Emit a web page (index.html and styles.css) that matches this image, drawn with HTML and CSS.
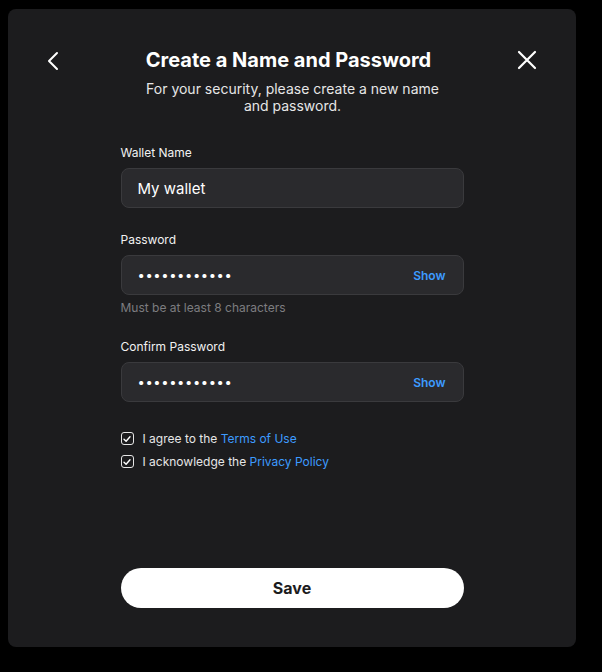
FILE: index.html
```html
<!DOCTYPE html>
<html>
<head>
<meta charset="utf-8">
<link rel="stylesheet" href="styles.css">
</head>
<body>
<div class="card">
  <div class="header">
    <button class="icon-btn back" aria-label="Back">
      <svg width="20" height="20" viewBox="0 0 20 20"><path d="M13 2 L5 10 L13 18" fill="none" stroke="#fff" stroke-width="2" stroke-linecap="round" stroke-linejoin="round"/></svg>
    </button>
    <div class="titles">
      <h1 class="title">Create a Name and Password</h1>
      <p class="subtitle">For your security, please create a new name and password.</p>
    </div>
    <button class="icon-btn close" aria-label="Close">
      <svg width="20" height="20" viewBox="0 0 20 20"><path d="M2 2 L18 18 M18 2 L2 18" fill="none" stroke="#fff" stroke-width="2.2" stroke-linecap="round"/></svg>
    </button>
  </div>
  <div class="form">
    <div class="field">
      <label class="label">Wallet Name</label>
      <div class="input"><span class="value">My wallet</span></div>
    </div>
    <div class="field">
      <label class="label">Password</label>
      <div class="input"><span class="dots">••••••••••••</span><span class="show">Show</span></div>
      <div class="hint">Must be at least 8 characters</div>
    </div>
    <div class="field">
      <label class="label">Confirm Password</label>
      <div class="input"><span class="dots">••••••••••••</span><span class="show">Show</span></div>
    </div>
    <div class="checks">
      <div class="check">
        <span class="box"><svg width="8" height="8" viewBox="0 0 8 8"><path d="M1 4.2 L3.1 6.2 L7 1.8" fill="none" stroke="#fff" stroke-width="1.4" stroke-linecap="round" stroke-linejoin="round"/></svg></span>
        <span>I agree to the <a class="link">Terms of Use</a></span>
      </div>
      <div class="check">
        <span class="box"><svg width="8" height="8" viewBox="0 0 8 8"><path d="M1 4.2 L3.1 6.2 L7 1.8" fill="none" stroke="#fff" stroke-width="1.4" stroke-linecap="round" stroke-linejoin="round"/></svg></span>
        <span>I acknowledge the <a class="link">Privacy Policy</a></span>
      </div>
    </div>
  </div>
  <button class="save">Save</button>
</div>
</body>
</html>
```
FILE: styles.css
```css
* { box-sizing: border-box; }
html, body { background: #000; }
body {
  margin: 0;
  padding: 9px 0 0 8px;
  font-family: Inter, "Noto Sans", sans-serif;
  color: #fff;
}
.card {
  width: 568px;
  height: 638px;
  background: #1c1c1e;
  border-radius: 8px;
  padding: 39px 32px 39px;
  display: flex;
  flex-direction: column;
  align-items: center;
}
.header {
  width: 100%;
  display: flex;
  justify-content: space-between;
  align-items: flex-start;
}
.icon-btn {
  background: none;
  border: 0;
  padding: 0;
  width: 20px;
  height: 20px;
  margin-top: 3px;
  display: flex;
}
.back { margin-left: 4px; }
.close { margin-right: 7px; margin-top: 2px; }
.titles {
  text-align: center;
  width: 310px;
}
.title {
  margin: 0 4px 0 0;
  font-size: 20px;
  line-height: 24px;
  font-weight: 700;
}
.subtitle {
  margin: 8px 0 0;
  font-size: 14px;
  line-height: 17px;
  color: #e6e6e6;
  padding: 0 4px 0 8px;
}
.form {
  width: 343px;
  margin-top: 31px;
  display: flex;
  flex-direction: column;
  gap: 24px;
}
.field { display: flex; flex-direction: column; }
.label {
  font-size: 12px;
  line-height: 15px;
  color: #f2f2f2;
  margin-bottom: 8px;
}
.input {
  height: 40px;
  background: #2a2a2d;
  border: 1px solid #3a3a3d;
  border-radius: 8px;
  display: flex;
  align-items: center;
  justify-content: space-between;
  padding: 0 16px;
}
.value { font-size: 15px; color: #fff; }
.dots { font-size: 13px; letter-spacing: 0.6px; color: #fff; }
.show { font-size: 12px; font-weight: 600; color: #3d9bff; margin-right: 1px; }
.hint {
  margin-top: 6px;
  font-size: 12px;
  line-height: 14px;
  color: #7d7d80;
}
.checks {
  display: flex;
  flex-direction: column;
  gap: 8px;
  margin-top: 5px;
}
.check {
  display: flex;
  align-items: center;
  gap: 9px;
  font-size: 12px;
  line-height: 15px;
  color: #e6e6e6;
}
.box {
  width: 13px;
  height: 13px;
  border: 1.4px solid #e6e6e6;
  border-radius: 3px;
  display: flex;
  align-items: center;
  justify-content: center;
}
.link { color: #3d9bff; }
.save {
  margin-top: auto;
  width: 343px;
  height: 40px;
  border: 0;
  border-radius: 20px;
  background: #fff;
  color: #1c1c1e;
  font-family: Inter, "Noto Sans", sans-serif;
  font-size: 16px;
  font-weight: 700;
}
```
